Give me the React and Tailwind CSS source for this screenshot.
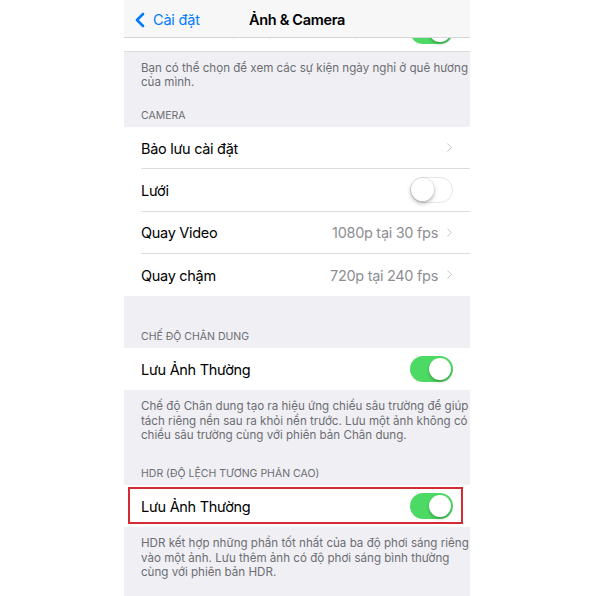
import { ChevronLeft, ChevronRight } from 'lucide-react'

const font = { fontFamily: 'Inter, "Noto Sans", sans-serif' }

function Toggle({ on }) {
  return on ? (
    <div className="w-[43px] h-[26px] rounded-full bg-[#4cd964] flex items-center justify-end p-[2px] shrink-0">
      <div className="w-[22px] h-[22px] rounded-full bg-white shadow-[0_2px_3px_rgba(0,0,0,0.25)]" />
    </div>
  ) : (
    <div className="w-[43px] h-[26px] rounded-full bg-white border-[1.5px] border-[#e5e5ea] flex items-center justify-start shrink-0">
      <div className="w-[23px] h-[23px] rounded-full bg-white shadow-[0_2px_4px_rgba(0,0,0,0.3),0_0_0_0.5px_rgba(0,0,0,0.08)]" />
    </div>
  )
}

function Row({ label, value, toggle, chevron, last }) {
  return (
    <div className="h-[42.3px] pl-[17px] bg-white flex">
      <div className={`flex-1 flex items-center pr-[17px] ${last ? '' : 'border-b border-[#dcdce0]'}`}>
        <span className="flex-1 pt-[2px] text-[14.5px] tracking-[-0.3px] text-black">{label}</span>
        {value && <span className="pt-[2px] text-[14.5px] tracking-[-0.3px] text-[#8e8e93] mr-[4px]">{value}</span>}
        {chevron && <ChevronRight size={15} strokeWidth={1.6} className="text-[#c7c7cc] -mr-[4px]" />}
        {toggle !== undefined && <Toggle on={toggle} />}
      </div>
    </div>
  )
}

function Header({ children, pt }) {
  return (
    <div className={`px-[17px] ${pt} pb-[4px] text-[10.5px] leading-[14px] text-[#6d6d72] uppercase`}>
      {children}
    </div>
  )
}

function Footer({ lines }) {
  return (
    <div className="px-[17px] pt-[9px] text-[11.6px] leading-[14.2px] text-[#6d6d72] whitespace-nowrap">
      {lines.map((l) => (
        <div key={l}>{l}</div>
      ))}
    </div>
  )
}

export default function App() {
  return (
    <div className="w-[600px] h-[596px] bg-white overflow-hidden" style={font}>
      <div className="ml-[124px] w-[346px] h-[596px] bg-[#efeff4] flex flex-col">
        {/* navigation bar */}
        <div className="h-[38px] shrink-0 bg-[#f7f7f7] border-b border-[#d6d6da] flex items-center pt-[3px] relative">
          <div className="flex items-center pl-[4px] text-[#007aff]">
            <ChevronLeft size={24} strokeWidth={2.6} />
            <span className="text-[14.5px] tracking-[-0.2px] ml-[1px]">Cài đặt</span>
          </div>
          <div className="absolute inset-0 pt-[3px] flex items-center justify-center pointer-events-none">
            <span className="text-[14.5px] tracking-[-0.3px] font-semibold text-black">Ảnh &amp; Camera</span>
          </div>
        </div>

        {/* row scrolled under the bar */}
        <div className="h-[13.5px] shrink-0 overflow-hidden bg-white border-b border-[#dcdce0]">
          <div className="-mt-[28px] h-[42px] pl-[17px] pr-[17px] flex items-center">
            <span className="flex-1 mb-[3px] text-[14.5px] tracking-[-0.3px] text-black">Hiển thị lịch ngày nghỉ quê hương</span>
            <Toggle on />
          </div>
        </div>

        <Footer lines={['Bạn có thể chọn để xem các sự kiện ngày nghỉ ở quê hương', 'của mình.']} />
        <Header pt="pt-[20px]">Camera</Header>

        <div className="shrink-0">
          <Row label="Bảo lưu cài đặt" chevron />
          <Row label="Lưới" toggle={false} />
          <Row label="Quay Video" value="1080p tại 30 fps" chevron />
          <Row label="Quay chậm" value="720p tại 240 fps" chevron last />
        </div>

        <Header pt="pt-[34px]">Chế độ chân dung</Header>
        <div className="shrink-0">
          <Row label="Lưu Ảnh Thường" toggle last />
        </div>
        <Footer
          lines={[
            'Chế độ Chân dung tạo ra hiệu ứng chiều sâu trường để giúp',
            'tách riêng nền sau ra khỏi nền trước. Lưu một ảnh không có',
            'chiều sâu trường cùng với phiên bản Chân dung.',
          ]}
        />

        <Header pt="pt-[25px]">HDR (Độ lệch tương phản cao)</Header>
        <div className="shrink-0 relative">
          <Row label="Lưu Ảnh Thường" toggle last />
          <div className="absolute left-[4px] right-[7px] top-[2px] bottom-[3px] border-2 border-[#d42a32] pointer-events-none" />
        </div>
        <Footer
          lines={[
            'HDR kết hợp những phần tốt nhất của ba độ phơi sáng riêng',
            'vào một ảnh. Lưu thêm ảnh có độ phơi sáng bình thường',
            'cùng với phiên bản HDR.',
          ]}
        />
      </div>
    </div>
  )
}
